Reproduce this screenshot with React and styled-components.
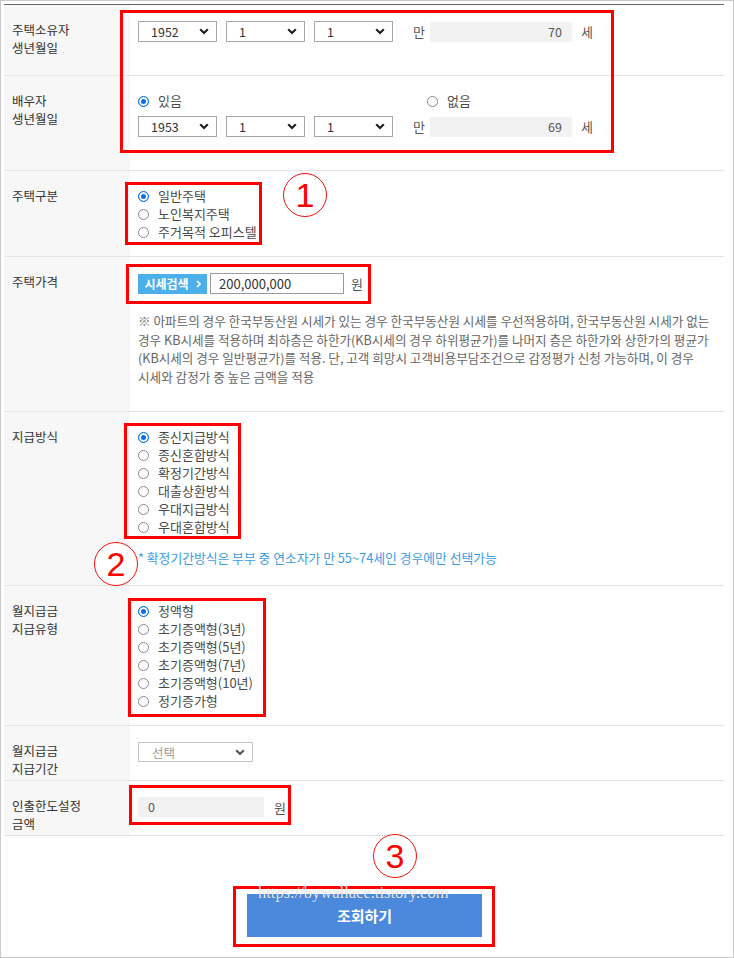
import React from "react";
import styled, { createGlobalStyle } from "styled-components";

const GlobalStyle = createGlobalStyle`
  html, body {
    margin: 0;
    padding: 0;
    background: #fff;
  }
  body {
    font-family: "Noto Sans CJK KR", "Noto Sans", sans-serif;
  }
`;

const Frame = styled.div`
  position: relative;
  box-sizing: border-box;
  width: 734px;
  height: 958px;
  border: 1px solid #c9c9c9;
  padding: 3px 9px 0 3px;
  overflow: hidden;
`;

const Table = styled.div`
  border-top: 1px solid #666;
`;

const Row = styled.div`
  box-sizing: border-box;
  display: grid;
  grid-template-columns: 126px 1fr;
  height: ${(p) => p.$h}px;
  border-bottom: 1px solid #e4e4e4;
`;

const Label = styled.div`
  background: #f7f7f7;
  padding: 16px 8px 0;
  font-size: 12.5px;
  line-height: 18px;
  color: #333;
`;

const Cell = styled.div`
  padding: 16px 8px 0;
  font-size: 13px;
  color: #555;
`;

const Line = styled.div`
  display: flex;
  align-items: center;
  margin-top: ${(p) => p.$mt || 0}px;
`;

const Select = styled.div`
  box-sizing: border-box;
  display: flex;
  align-items: center;
  justify-content: space-between;
  width: ${(p) => p.$w}px;
  height: ${(p) => p.$hgt || 21}px;
  margin-right: ${(p) => p.$mr || 0}px;
  padding: 0 7px 0 ${(p) => (p.$muted ? 13 : 12)}px;
  border: 1px solid ${(p) => (p.$muted ? "#c4c4c4" : "#a6a6a6")};
  background: #fff;
  font-size: 12.5px;
  color: ${(p) => (p.$muted ? "#999" : "#333")};
`;

const Unit = styled.span`
  margin: 0 ${(p) => p.$mr || 0}px 0 ${(p) => p.$ml || 0}px;
  font-size: 13px;
  color: #555;
`;

const ReadOnly = styled.div`
  box-sizing: border-box;
  width: ${(p) => p.$w}px;
  height: 20px;
  line-height: 20px;
  padding: 0 10px;
  background: #f2f2f2;
  text-align: ${(p) => (p.$left ? "left" : "right")};
  font-size: 12.5px;
  color: #555;
`;

const RadioList = styled.div`
  display: flex;
  flex-direction: ${(p) => (p.$row ? "row" : "column")};
`;

const RadioItem = styled.label`
  display: flex;
  align-items: center;
  gap: 9px;
  width: ${(p) => (p.$w ? `${p.$w}px` : "auto")};
  height: 18px;
  line-height: 18px;
  font-size: 13px;
  color: #4a4a4a;
`;

const Dot = styled.span`
  box-sizing: border-box;
  flex: none;
  width: 11px;
  height: 11px;
  border-radius: 50%;
  border: 1px solid ${(p) => (p.$on ? "#0b6fe8" : "#8a8a8a")};
  background: ${(p) => (p.$on ? "#0b6fe8" : "#fff")};
  box-shadow: ${(p) => (p.$on ? "inset 0 0 0 2px #fff" : "none")};
`;

const SearchButton = styled.div`
  display: flex;
  align-items: center;
  justify-content: center;
  gap: 7px;
  width: 69px;
  height: 20px;
  margin-right: 3px;
  background: #4bb0ea;
  color: #fff;
  font-size: 12px;
  font-weight: 700;
`;

const PriceInput = styled.div`
  box-sizing: border-box;
  width: 134px;
  height: 21px;
  line-height: 19px;
  padding: 0 8px;
  border: 1px solid #9a9a9a;
  font-size: 13px;
  color: #333;
`;

const Note = styled.p`
  margin: 18px 0 0;
  font-size: 12.6px;
  line-height: 18.5px;
  color: #666;
  white-space: nowrap;
`;

const BlueNote = styled.p`
  margin: 13px 0 0;
  font-size: 12.8px;
  line-height: 18px;
  color: #3a9ce3;
`;

const Footer = styled.div`
  display: flex;
  justify-content: center;
  padding-top: 58px;
`;

const SubmitButton = styled.button`
  width: 235px;
  height: 43px;
  border: 0;
  background: #4a89dc;
  color: #fff;
  font-family: "Noto Sans CJK KR", sans-serif;
  font-size: 15px;
  font-weight: 700;
  margin-left: 1px;
`;

const Mark = styled.div`
  position: absolute;
  left: ${(p) => p.$x - 1}px;
  top: ${(p) => p.$y - 1}px;
  width: ${(p) => p.$w}px;
  height: ${(p) => p.$h}px;
  box-sizing: border-box;
  border: 3px solid #ff0000;
  pointer-events: none;
`;

const Badge = styled.div`
  position: absolute;
  left: ${(p) => p.$x - 1}px;
  top: ${(p) => p.$y - 1}px;
  box-sizing: border-box;
  width: 44px;
  height: 44px;
  border: 1.5px solid #f01010;
  border-radius: 50%;
  display: flex;
  align-items: center;
  justify-content: center;
  font-family: "Liberation Sans", Arial, sans-serif;
  font-size: 34px;
  line-height: 1;
  color: #f00;
  background: #fff;
`;

const Watermark = styled.div`
  position: absolute;
  left: 257px;
  top: 882px;
  font-family: "Liberation Serif", serif;
  font-size: 16.5px;
  color: rgba(255, 255, 255, 0.85);
  text-shadow: 0 0 1px rgba(80, 80, 80, 0.45);
  pointer-events: none;
`;

function Chevron({ color = "#222" }) {
  return (
    <svg width="10" height="7" viewBox="0 0 10 7">
      <polyline points="1.2,1.2 5,5 8.8,1.2" fill="none" stroke={color} strokeWidth="2.2" />
    </svg>
  );
}

function Radio({ on, w, children }) {
  return (
    <RadioItem $w={w}>
      <Dot $on={on} />
      {children}
    </RadioItem>
  );
}

function BirthLine({ year, age }) {
  return (
    <Line>
      <Select $w={79} $mr={9}>
        {year}
        <Chevron />
      </Select>
      <Select $w={79} $mr={9}>
        1
        <Chevron />
      </Select>
      <Select $w={79}>
        1
        <Chevron />
      </Select>
      <Unit $ml={20} $mr={5}>만</Unit>
      <ReadOnly $w={142}>{age}</ReadOnly>
      <Unit $ml={9}>세</Unit>
    </Line>
  );
}

const houseTypes = ["일반주택", "노인복지주택", "주거목적 오피스텔"];
const payMethods = ["종신지급방식", "종신혼합방식", "확정기간방식", "대출상환방식", "우대지급방식", "우대혼합방식"];
const payTypes = ["정액형", "초기증액형(3년)", "초기증액형(5년)", "초기증액형(7년)", "초기증액형(10년)", "정기증가형"];

export default function App() {
  return (
    <>
      <GlobalStyle />
      <Frame>
        <Table>
          <Row $h={71}>
            <Label>
              주택소유자
              <br />
              생년월일
            </Label>
            <Cell>
              <BirthLine year="1952" age="70" />
            </Cell>
          </Row>

          <Row $h={95}>
            <Label>
              배우자
              <br />
              생년월일
            </Label>
            <Cell>
              <RadioList $row>
                <Radio on w={289}>있음</Radio>
                <Radio>없음</Radio>
              </RadioList>
              <Line $mt={6}>
                <BirthLine year="1953" age="69" />
              </Line>
            </Cell>
          </Row>

          <Row $h={86}>
            <Label>주택구분</Label>
            <Cell>
              <RadioList>
                {houseTypes.map((t, i) => (
                  <Radio key={t} on={i === 0}>
                    {t}
                  </Radio>
                ))}
              </RadioList>
            </Cell>
          </Row>

          <Row $h={155}>
            <Label>주택가격</Label>
            <Cell>
              <Line>
                <SearchButton>
                  시세검색
                  <svg width="5" height="8" viewBox="0 0 5 8">
                    <polyline points="1,1 4,4 1,7" fill="none" stroke="#fff" strokeWidth="1.6" />
                  </svg>
                </SearchButton>
                <PriceInput>200,000,000</PriceInput>
                <Unit $ml={7}>원</Unit>
              </Line>
              <Note>
                ※ 아파트의 경우 한국부동산원 시세가 있는 경우 한국부동산원 시세를 우선적용하며, 한국부동산원 시세가 없는
                <br />
                경우 KB시세를 적용하며 최하층은 하한가(KB시세의 경우 하위평균가)를 나머지 층은 하한가와 상한가의 평균가
                <br />
                (KB시세의 경우 일반평균가)를 적용. 단, 고객 희망시 고객비용부담조건으로 감정평가 신청 가능하며, 이 경우
                <br />
                시세와 감정가 중 높은 금액을 적용
              </Note>
            </Cell>
          </Row>

          <Row $h={174}>
            <Label>지급방식</Label>
            <Cell>
              <RadioList>
                {payMethods.map((t, i) => (
                  <Radio key={t} on={i === 0}>
                    {t}
                  </Radio>
                ))}
              </RadioList>
              <BlueNote>* 확정기간방식은 부부 중 연소자가 만 55~74세인 경우에만 선택가능</BlueNote>
            </Cell>
          </Row>

          <Row $h={140}>
            <Label>
              월지급금
              <br />
              지급유형
            </Label>
            <Cell>
              <RadioList>
                {payTypes.map((t, i) => (
                  <Radio key={t} on={i === 0}>
                    {t}
                  </Radio>
                ))}
              </RadioList>
            </Cell>
          </Row>

          <Row $h={55}>
            <Label>
              월지급금
              <br />
              지급기간
            </Label>
            <Cell>
              <Select $w={115} $hgt={20} $muted>
                선택
                <Chevron color="#555" />
              </Select>
            </Cell>
          </Row>

          <Row $h={55}>
            <Label>
              인출한도설정
              <br />
              금액
            </Label>
            <Cell>
              <Line>
                <ReadOnly $w={126} $left>
                  0
                </ReadOnly>
                <Unit $ml={10}>원</Unit>
              </Line>
            </Cell>
          </Row>
        </Table>

        <Footer>
          <SubmitButton>조회하기</SubmitButton>
        </Footer>

        <Mark $x={120} $y={10} $w={494} $h={143} />
        <Mark $x={125} $y={182} $w={137} $h={63} />
        <Mark $x={126} $y={264} $w={245} $h={40} />
        <Mark $x={124} $y={423} $w={117} $h={116} />
        <Mark $x={128} $y={598} $w={138} $h={119} />
        <Mark $x={129} $y={785} $w={162} $h={40} />
        <Mark $x={233} $y={886} $w={262} $h={61} />

        <Badge $x={283} $y={173}>1</Badge>
        <Badge $x={94} $y={542}>2</Badge>
        <Badge $x={373} $y={834}>3</Badge>

        <Watermark>https://bywallace.tistory.com</Watermark>
      </Frame>
    </>
  );
}
